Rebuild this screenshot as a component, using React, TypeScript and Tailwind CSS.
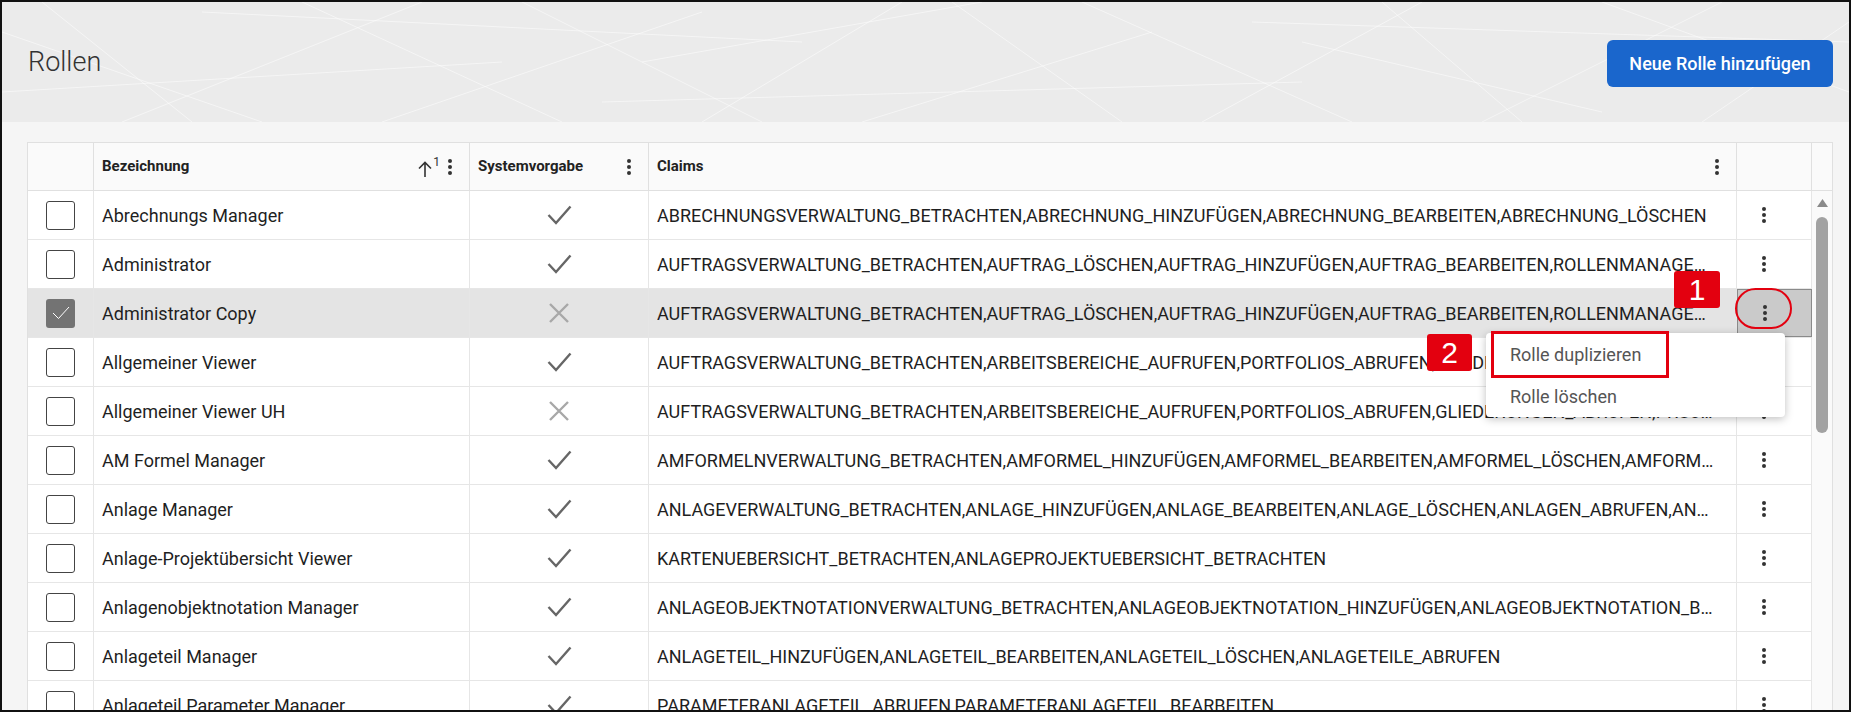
import React from 'react';

type Role = {
  name: string;
  system: boolean;
  claims: string;
  selected?: boolean;
};

const roles: Role[] = [
  {
    name: 'Abrechnungs Manager',
    system: true,
    claims:
      'ABRECHNUNGSVERWALTUNG_BETRACHTEN,ABRECHNUNG_HINZUFÜGEN,ABRECHNUNG_BEARBEITEN,ABRECHNUNG_LÖSCHEN',
  },
  {
    name: 'Administrator',
    system: true,
    claims:
      'AUFTRAGSVERWALTUNG_BETRACHTEN,AUFTRAG_LÖSCHEN,AUFTRAG_HINZUFÜGEN,AUFTRAG_BEARBEITEN,ROLLENMANAGEMENT_BETRACHTEN,ROLLE_HINZUFÜGEN',
  },
  {
    name: 'Administrator Copy',
    system: false,
    selected: true,
    claims:
      'AUFTRAGSVERWALTUNG_BETRACHTEN,AUFTRAG_LÖSCHEN,AUFTRAG_HINZUFÜGEN,AUFTRAG_BEARBEITEN,ROLLENMANAGEMENT_BETRACHTEN,ROLLE_HINZUFÜGEN',
  },
  {
    name: 'Allgemeiner Viewer',
    system: true,
    claims:
      'AUFTRAGSVERWALTUNG_BETRACHTEN,ARBEITSBEREICHE_AUFRUFEN,PORTFOLIOS_ABRUFEN,GLIEDERUNGEN_ABRUFEN,PROJEKTE_ABRUFEN,ANLAGEN_ABRUFEN',
  },
  {
    name: 'Allgemeiner Viewer UH',
    system: false,
    claims:
      'AUFTRAGSVERWALTUNG_BETRACHTEN,ARBEITSBEREICHE_AUFRUFEN,PORTFOLIOS_ABRUFEN,GLIEDERUNGEN_ABRUFEN,PROJEKTE_ABRUFEN,ANLAGEN_ABRUFEN',
  },
  {
    name: 'AM Formel Manager',
    system: true,
    claims:
      'AMFORMELNVERWALTUNG_BETRACHTEN,AMFORMEL_HINZUFÜGEN,AMFORMEL_BEARBEITEN,AMFORMEL_LÖSCHEN,AMFORMELN_ABRUFEN',
  },
  {
    name: 'Anlage Manager',
    system: true,
    claims:
      'ANLAGEVERWALTUNG_BETRACHTEN,ANLAGE_HINZUFÜGEN,ANLAGE_BEARBEITEN,ANLAGE_LÖSCHEN,ANLAGEN_ABRUFEN,ANLAGENTYPEN_ABRUFEN',
  },
  {
    name: 'Anlage-Projektübersicht Viewer',
    system: true,
    claims: 'KARTENUEBERSICHT_BETRACHTEN,ANLAGEPROJEKTUEBERSICHT_BETRACHTEN',
  },
  {
    name: 'Anlagenobjektnotation Manager',
    system: true,
    claims:
      'ANLAGEOBJEKTNOTATIONVERWALTUNG_BETRACHTEN,ANLAGEOBJEKTNOTATION_HINZUFÜGEN,ANLAGEOBJEKTNOTATION_BEARBEITEN',
  },
  {
    name: 'Anlageteil Manager',
    system: true,
    claims: 'ANLAGETEIL_HINZUFÜGEN,ANLAGETEIL_BEARBEITEN,ANLAGETEIL_LÖSCHEN,ANLAGETEILE_ABRUFEN',
  },
  {
    name: 'Anlageteil Parameter Manager',
    system: true,
    claims: 'PARAMETERANLAGETEIL_ABRUFEN,PARAMETERANLAGETEIL_BEARBEITEN',
  },
];

// faint white lines in the header background
const patternLines: [number, number, number, number][] = [
  [0, 30, 260, 120],
  [40, 0, 190, 120],
  [120, 120, 420, 0],
  [300, 0, 560, 120],
  [380, 120, 700, 10],
  [520, 0, 760, 120],
  [640, 60, 980, 0],
  [700, 120, 900, 0],
  [860, 120, 1150, 30],
  [950, 0, 1120, 120],
  [1080, 0, 1350, 120],
  [1200, 120, 1420, 0],
  [1300, 40, 1600, 110],
  [1380, 0, 1520, 120],
  [1480, 120, 1720, 0],
  [1600, 0, 1847, 90],
  [1700, 120, 1847, 20],
  [0, 90, 500, 60],
  [600, 100, 1300, 80],
  [1250, 20, 1847, 40],
  [200, 10, 800, 40],
];

function Kebab({ className = '' }: { className?: string }) {
  return (
    <svg width="4" height="16" viewBox="0 0 4 16" className={className}>
      <circle cx="2" cy="2" r="2" fill="currentColor" />
      <circle cx="2" cy="8" r="2" fill="currentColor" />
      <circle cx="2" cy="14" r="2" fill="currentColor" />
    </svg>
  );
}

function CheckIcon() {
  return (
    <svg width="25" height="20" viewBox="0 0 25 20">
      <polyline points="1.5,10 9,18 23.5,1.5" fill="none" stroke="#666" strokeWidth="2.4" />
    </svg>
  );
}

function CrossIcon() {
  return (
    <svg width="22" height="22" viewBox="0 0 22 22">
      <path d="M2 2 L20 20 M20 2 L2 20" fill="none" stroke="#a8a8a8" strokeWidth="2.4" />
    </svg>
  );
}

function Checkbox({ checked }: { checked?: boolean }) {
  if (checked) {
    return (
      <div className="w-[29px] h-[29px] rounded-[3px] bg-[#737373] flex items-center justify-center">
        <svg width="18" height="14" viewBox="0 0 18 14">
          <polyline points="1,7 6.5,12.5 17,1" fill="none" stroke="#ffffff" strokeWidth="1" />
        </svg>
      </div>
    );
  }
  return <div className="w-[29px] h-[29px] rounded-[3px] border border-[#444] bg-white" />;
}

export default function App() {
  return (
    <div className="relative w-[1851px] h-[712px] overflow-hidden border-2 border-[#111] bg-[#f5f5f5] font-['Roboto','Liberation_Sans',sans-serif] text-[#1f1f1f] flex flex-col">
      <header className="relative h-[120px] shrink-0 bg-[#ebebeb] flex items-center justify-between pl-[26px] pr-[16px] overflow-hidden">
        <svg className="absolute inset-0" width="1847" height="120" viewBox="0 0 1847 120">
          {patternLines.map(([x1, y1, x2, y2], i) => (
            <line key={i} x1={x1} y1={y1} x2={x2} y2={y2} stroke="#ffffff" strokeOpacity="0.5" strokeWidth="1" />
          ))}
        </svg>
        <h1 className="relative text-[27px] font-light text-[#333] mt-[1px]">Rollen</h1>
        <button className="relative h-[47px] w-[226px] rounded-[6px] bg-[#1a66cc] text-white text-[18px] font-medium mt-[3px]">
          Neue Rolle hinzufügen
        </button>
      </header>

      <div className="flex-1 pt-[20px] pl-[25px] pr-[16px]">
        <div className="border border-[#e0e0e0] bg-white">
          {/* header row */}
          <div className="grid grid-cols-[66px_376px_179px_1088px_75px_20px] h-[48px] bg-[#fafafa] border-b border-[#e0e0e0] text-[15px] font-bold text-[#222]">
            <div className="border-r border-[#e0e0e0]" />
            <div className="border-r border-[#e0e0e0] flex items-center pl-[8px] pr-[17px]">
              <span className="flex-1">Bezeichnung</span>
              <span className="flex items-start mr-[8px] text-[#333]">
                <svg width="14" height="16" viewBox="0 0 14 16" className="mt-[5px]">
                  <path d="M7 1.5 V16 M1 7.5 L7 1.5 L13 7.5" fill="none" stroke="#333" strokeWidth="1.6" />
                </svg>
                <span className="text-[12px] font-normal leading-none ml-[1px]">1</span>
              </span>
              <Kebab className="text-[#333]" />
            </div>
            <div className="border-r border-[#e0e0e0] flex items-center pl-[8px] pr-[17px]">
              <span className="flex-1">Systemvorgabe</span>
              <Kebab className="text-[#333]" />
            </div>
            <div className="border-r border-[#e0e0e0] flex items-center pl-[8px] pr-[17px]">
              <span className="flex-1">Claims</span>
              <Kebab className="text-[#333]" />
            </div>
            <div className="border-r border-[#e0e0e0]" />
            <div />
          </div>

          {/* body */}
          <div className="flex">
            <div className="flex-1">
              {roles.map((r) => (
                <div
                  key={r.name}
                  className={`grid grid-cols-[66px_376px_179px_1088px_75px] h-[49px] border-b border-[#e6e6e6] text-[18px] ${
                    r.selected ? 'bg-[#e4e4e4]' : 'bg-white'
                  }`}
                >
                  <div className="border-r border-[#e6e6e6] flex items-center justify-center">
                    <Checkbox checked={r.selected} />
                  </div>
                  <div className="border-r border-[#e6e6e6] flex items-center pl-[8px] truncate">{r.name}</div>
                  <div className="border-r border-[#e6e6e6] flex items-center justify-center">
                    {r.system ? <CheckIcon /> : <CrossIcon />}
                  </div>
                  <div className="border-r border-[#e6e6e6] flex items-center pl-[8px] pr-[18px] min-w-0">
                    <span className="truncate">{r.claims}</span>
                  </div>
                  <div
                    className={`flex items-center pl-[25px] ${
                      r.selected ? 'bg-[#cacaca] border border-[#8a8a8a]' : 'border-r border-[#e6e6e6]'
                    }`}
                  >
                    <Kebab className="text-[#333]" />
                  </div>
                </div>
              ))}
            </div>
            {/* scrollbar */}
            <div className="w-[20px] bg-[#fafafa] flex flex-col items-center pt-[8px]">
              <svg width="11" height="8" viewBox="0 0 11 8">
                <path d="M5.5 0 L11 8 L0 8 Z" fill="#8a8a8a" />
              </svg>
              <div className="mt-[10px] w-[12px] h-[216px] rounded-[6px] bg-[#a2a2a2]" />
            </div>
          </div>
        </div>
      </div>

      {/* context menu */}
      <div className="absolute left-[1484px] top-[331px] w-[299px] h-[84px] bg-white rounded-[4px] shadow-[0_2px_8px_rgba(0,0,0,0.25)] text-[18px] text-[#555]">
        <div className="h-[42px] flex items-center pl-[24px]">Rolle duplizieren</div>
        <div className="h-[42px] flex items-center pl-[24px]">Rolle löschen</div>
      </div>

      {/* annotations */}
      <div className="absolute left-[1489px] top-[329px] w-[178px] h-[47px] border-[3px] border-[#e3000f]" />
      <div className="absolute left-[1733px] top-[286px] w-[57px] h-[41px] rounded-full border-2 border-[#e3000f]" />
      <div className="absolute left-[1672px] top-[269px] w-[46px] h-[37px] rounded-[3px] bg-[#e3000f] text-white text-[30px] leading-none flex items-center justify-center font-['Liberation_Sans',sans-serif]">
        1
      </div>
      <div className="absolute left-[1425px] top-[332px] w-[45px] h-[37px] rounded-[3px] bg-[#e3000f] text-white text-[30px] leading-none flex items-center justify-center font-['Liberation_Sans',sans-serif]">
        2
      </div>
    </div>
  );
}
